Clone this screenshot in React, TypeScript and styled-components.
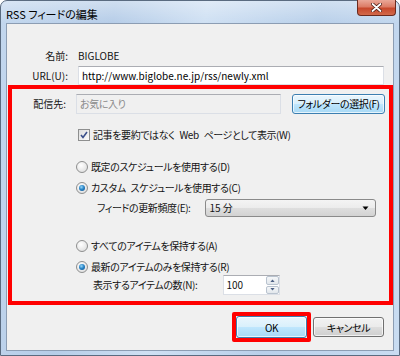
import styled, { createGlobalStyle } from 'styled-components';

const GlobalStyle = createGlobalStyle`
  html, body {
    margin: 0;
    padding: 0;
    background: #ffffff;
  }
  body {
    font-family: "Noto Sans CJK JP", "Noto Sans", sans-serif;
    font-size: 10px;
    font-feature-settings: "palt";
    color: #141414;
    white-space: nowrap;
  }
`;

const Window = styled.div`
  width: 400px;
  height: 356px;
  box-sizing: border-box;
  border: 1px solid #5a6b80;
  border-radius: 7px 7px 0 0;
  background:
    linear-gradient(180deg, rgba(255, 255, 255, 0.35), rgba(255, 255, 255, 0) 22px),
    linear-gradient(100deg, #c3d7ee 0%, #b6cde8 25%, #cfe0f3 45%, #b9d0ea 70%, #c9dcf1 100%);
  display: flex;
  flex-direction: column;
  padding: 0 5px 4px 5px;
`;

const TitleBar = styled.div`
  height: 22px;
  display: flex;
  align-items: flex-start;
  justify-content: space-between;
`;

const Title = styled.div`
  padding: 5px 0 0 0;
  font-size: 11px;
  line-height: 16px;
  color: #000;
`;

const CloseButton = styled.div`
  width: 39px;
  height: 16px;
  margin-top: -1px;
  margin-right: -2px;
  box-sizing: border-box;
  border: 1px solid #6b2a1e;
  border-top: none;
  border-radius: 0 0 4px 4px;
  background: linear-gradient(180deg, #eaa898 0%, #dc7c66 45%, #c7482c 55%, #d26a4b 100%);
  display: flex;
  align-items: center;
  justify-content: center;
`;

const Client = styled.div`
  flex: 1;
  border: 1px solid #8c9db3;
  background: #f0f0f0;
  display: flex;
  flex-direction: column;
`;

const Row = styled.div<{ $top: number; $indent?: number }>`
  display: flex;
  align-items: center;
  margin-top: ${p => p.$top}px;
  margin-left: ${p => p.$indent ?? 0}px;
  line-height: 16px;
`;

const Label = styled.div<{ $width: number }>`
  width: ${p => p.$width}px;
  text-align: right;
  flex-shrink: 0;
`;

const Value = styled.div<{ $fill?: boolean }>`
  margin-left: 10px;
  display: flex;
  ${p => (p.$fill ? 'flex: 1; margin-right: 9px;' : '')}
`;

const JpText = styled.span`
  letter-spacing: -0.4px;
`;

const TextBox = styled.div<{ $disabled?: boolean; $width?: number }>`
  box-sizing: border-box;
  height: ${p => (p.$disabled ? 20 : 19)}px;
  ${p => (p.$width ? `width: ${p.$width}px;` : 'flex: 1;')}
  border: 1px solid #dbdfe6;
  border-top-color: #abadb3;
  background: ${p => (p.$disabled ? '#f0f0f0' : '#ffffff')};
  color: ${p => (p.$disabled ? '#8a8a8a' : '#000')};
  padding: 0 3px;
  display: flex;
  align-items: center;
`;

const Highlight = styled.div`
  margin-left: 1px;
  width: 385px;
  height: 220px;
  box-sizing: border-box;
  border: 4px solid #ff0000;
  display: flex;
  flex-direction: column;
`;

const Button = styled.div<{ $blue?: boolean; $width: number; $height: number }>`
  box-sizing: border-box;
  width: ${p => p.$width}px;
  height: ${p => p.$height}px;
  border: 1px solid ${p => (p.$blue ? '#3c7fb1' : '#707070')};
  border-radius: 3px;
  background: ${p =>
    p.$blue
      ? 'linear-gradient(180deg, #eaf6fd 0%, #d9f0fc 48%, #bee6fd 52%, #a7d9f5 100%)'
      : 'linear-gradient(180deg, #f2f2f2 0%, #ebebeb 48%, #dddddd 52%, #cfcfcf 100%)'};
  box-shadow: inset 0 0 0 1px rgba(255, 255, 255, 0.7);
  display: flex;
  align-items: center;
  justify-content: center;
  color: #000;
  letter-spacing: -0.4px;
`;

const Option = styled.div<{ $top: number }>`
  display: flex;
  align-items: center;
  margin-top: ${p => p.$top}px;
  margin-left: 64px;
  height: 16px;
  line-height: 16px;
  letter-spacing: -0.4px;
  word-spacing: 3px;
`;

const CheckBox = styled.span`
  width: 12px;
  height: 12px;
  box-sizing: border-box;
  border: 1px solid #8e8f8f;
  background: linear-gradient(135deg, #dedede, #fbfbfb);
  display: flex;
  align-items: center;
  justify-content: center;
  margin: 0 3px 0 2px;
`;

const RadioDot = styled.span<{ $on?: boolean }>`
  width: 12px;
  height: 12px;
  box-sizing: border-box;
  border-radius: 50%;
  border: 1px solid #8e8f8f;
  background: radial-gradient(circle at 40% 35%, #ffffff, #d8d8d8);
  display: flex;
  align-items: center;
  justify-content: center;
  margin-right: 3px;
  &::after {
    content: '';
    display: ${p => (p.$on ? 'block' : 'none')};
    width: 6px;
    height: 6px;
    border-radius: 50%;
    background: radial-gradient(circle at 40% 35%, #9ad8f8 0%, #2a86c8 45%, #0d4a86 100%);
  }
`;

const Select = styled.div`
  box-sizing: border-box;
  width: 171px;
  height: 18px;
  margin-left: 14px;
  border: 1px solid #8a8a8a;
  border-radius: 3px;
  background: linear-gradient(180deg, #f4f4f4 0%, #ececec 48%, #dedede 52%, #d2d2d2 100%);
  display: flex;
  align-items: center;
  justify-content: space-between;
  padding: 0 6px 0 4px;
`;

const Spin = styled.div`
  box-sizing: border-box;
  width: 57px;
  height: 20px;
  margin-left: 26px;
  border: 1px solid #dbdfe6;
  border-top-color: #abadb3;
  background: #ffffff;
  display: flex;
  align-items: stretch;
`;

const SpinText = styled.div`
  flex: 1;
  padding-left: 2px;
  display: flex;
  align-items: center;
`;

const SpinButtons = styled.div`
  width: 13px;
  display: flex;
  flex-direction: column;
  gap: 1px;
  padding-left: 1px;
`;

const SpinButton = styled.div`
  flex: 1;
  box-sizing: border-box;
  border: 1px solid #b9c3cf;
  border-radius: 2px;
  background: linear-gradient(180deg, #f5f7f9, #e2e7ec);
  display: flex;
  align-items: center;
  justify-content: center;
`;

const Footer = styled.div`
  display: flex;
  align-items: center;
  justify-content: flex-end;
  margin-top: 7px;
  margin-right: 9px;
  gap: 2px;
`;

const FocusMark = styled.div`
  border: 4px solid #ff0000;
  border-radius: 2px;
`;

const Arrow = ({ up, size = 5, color = '#000' }: { up?: boolean; size?: number; color?: string }) => (
  <svg width={size + 2} height={size} viewBox="0 0 7 4">
    <path d={up ? 'M0.5 4 L3.5 0.5 L6.5 4 Z' : 'M0.5 0 L3.5 3.5 L6.5 0 Z'} fill={color} />
  </svg>
);

export default function App() {
  return (
    <>
      <GlobalStyle />
      <Window>
        <TitleBar>
          <Title>RSS フィードの編集</Title>
          <CloseButton>
            <svg width="11" height="9" viewBox="0 0 11 9">
              <path d="M1.5 1 L9.5 8 M9.5 1 L1.5 8" stroke="#4a1a12" strokeWidth="3.4" strokeLinecap="round" />
              <path d="M1.5 1 L9.5 8 M9.5 1 L1.5 8" stroke="#ffffff" strokeWidth="1.8" strokeLinecap="round" />
            </svg>
          </CloseButton>
        </TitleBar>
        <Client>
          <Row $top={24}>
            <Label $width={61}>名前:</Label>
            <Value>BIGLOBE</Value>
          </Row>
          <Row $top={2}>
            <Label $width={61}>URL(U):</Label>
            <Value $fill>
              <TextBox>http://www.biglobe.ne.jp/rss/newly.xml</TextBox>
            </Value>
          </Row>
          <Highlight>
            <Row $top={5}>
              <Label $width={54}>配信先:</Label>
              <Value>
                <TextBox $disabled $width={205}>
                  <JpText>お気に入り</JpText>
                </TextBox>
              </Value>
              <Button $blue $width={93} $height={20} style={{ marginLeft: 11 }}>
                フォルダーの選択(F)
              </Button>
            </Row>
            <Option $top={13}>
              <CheckBox>
                <svg width="8" height="8" viewBox="0 0 8 8">
                  <path d="M1 4 L3 6.5 L7 1" stroke="#3b4f8a" strokeWidth="1.6" fill="none" />
                </svg>
              </CheckBox>
              記事を要約ではなく Web ページとして表示(W)
            </Option>
            <Option $top={16}>
              <RadioDot />
              既定のスケジュールを使用する(D)
            </Option>
            <Option $top={5}>
              <RadioDot $on />
              カスタム スケジュールを使用する(C)
            </Option>
            <Row $top={3} $indent={85}>
              <JpText>フィードの更新頻度(E):</JpText>
              <Select>
                <span>15 分</span>
                <Arrow />
              </Select>
            </Row>
            <Option $top={21}>
              <RadioDot />
              すべてのアイテムを保持する(A)
            </Option>
            <Option $top={5}>
              <RadioDot $on />
              最新のアイテムのみを保持する(R)
            </Option>
            <Row $top={0} $indent={81}>
              <JpText>表示するアイテムの数(N):</JpText>
              <Spin>
                <SpinText>100</SpinText>
                <SpinButtons>
                  <SpinButton>
                    <Arrow up size={3} color="#4d6185" />
                  </SpinButton>
                  <SpinButton>
                    <Arrow size={3} color="#4d6185" />
                  </SpinButton>
                </SpinButtons>
              </Spin>
            </Row>
          </Highlight>
          <Footer>
            <FocusMark>
              <Button $blue $width={71} $height={22}>OK</Button>
            </FocusMark>
            <Button $width={71} $height={20}>
              キャンセル
            </Button>
          </Footer>
        </Client>
      </Window>
    </>
  );
}
